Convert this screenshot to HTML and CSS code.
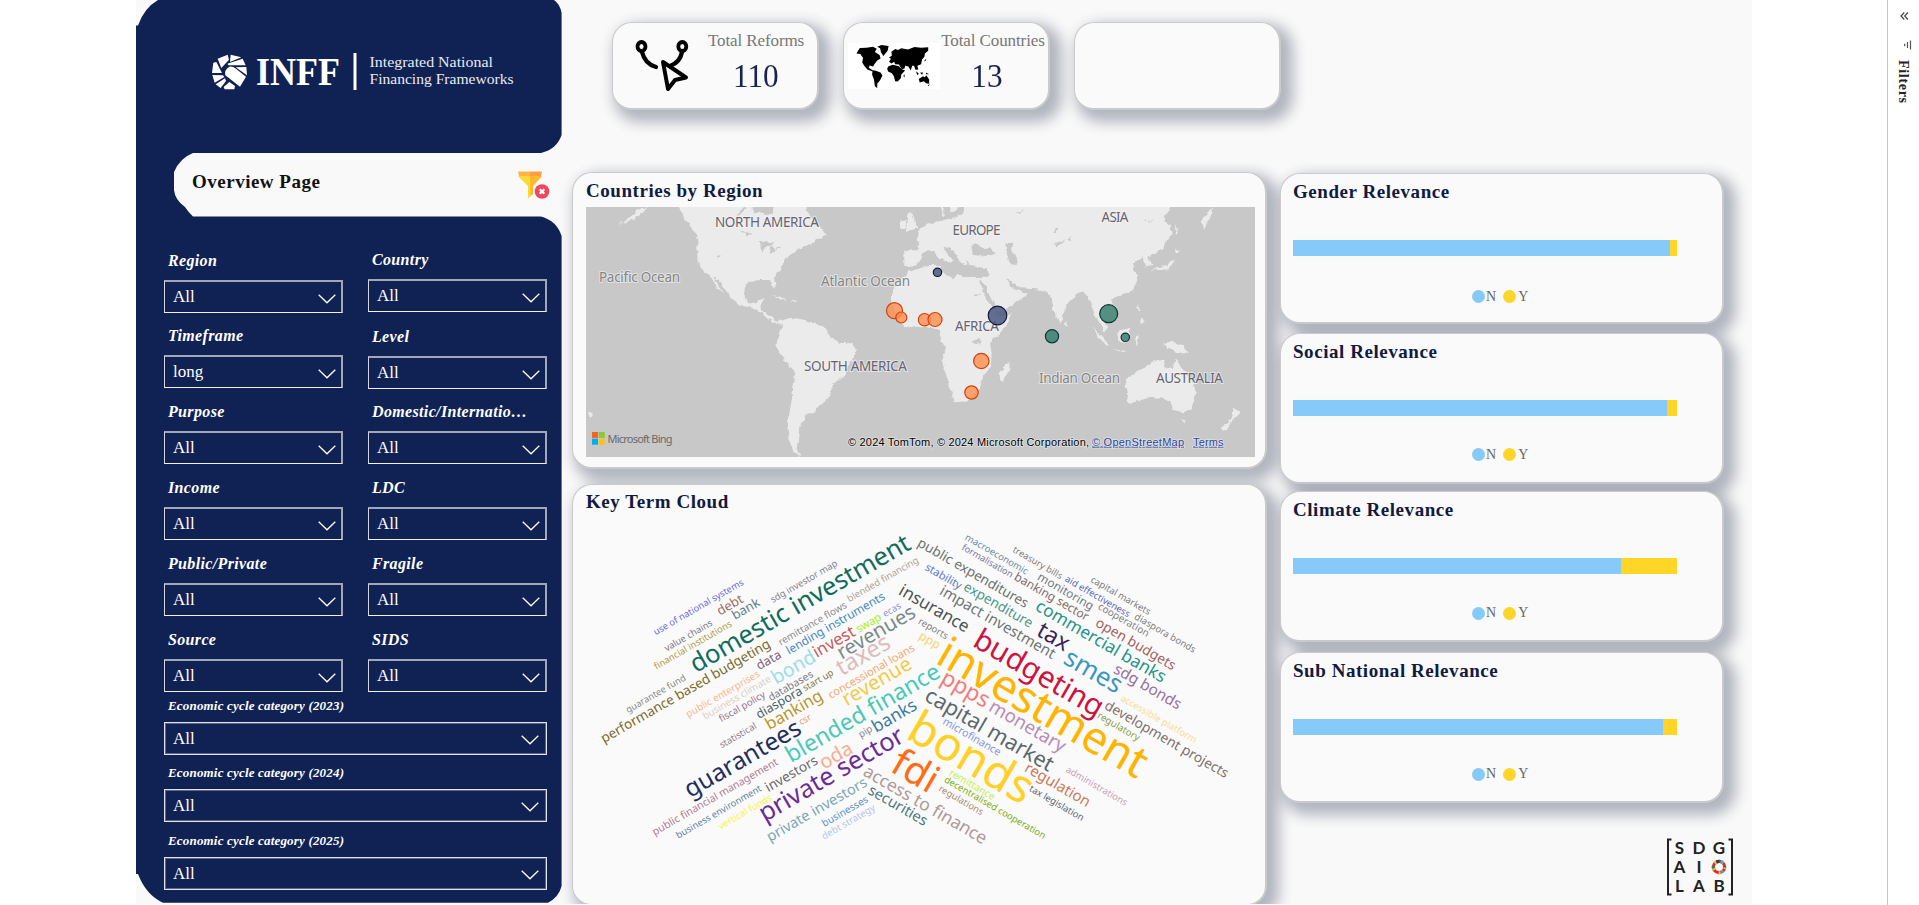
FILE: index.html
```html
<!DOCTYPE html>
<html lang="en">
<head>
<meta charset="utf-8">
<title>INFF Overview</title>
<link rel="stylesheet" href="styles.css">
</head>
<body>
<svg width="0" height="0" class="defs">
  <symbol id="chev" viewBox="0 0 18 10"><path d="M.7 .8 9 8.8 17.300 .8" fill="none" stroke="#fff" stroke-width="1.3"/></symbol>
</svg>
<div class="report">
  <aside class="sidebar">
    <svg class="sidebar-shape" width="426" height="905" viewBox="0 0 426 905">
      <path fill="#102254" d="M22 0Q8 8 2 25.500H0V874H2Q10 895 27 902.700H412Q423 897 425.600 886V236Q421 221 405 216.500H57Q53 213 49 207Q39 200 38 190V172Q44 158 57 153H405Q421 149 425.600 135V13Q424 4 418 0Z"/>
    </svg>
    <div class="brand">
      <svg width="290" height="48" viewBox="205 48 290 48" class="logo">
        <g transform="translate(130 0) scale(.33333)" fill="#fff">
          <path d="M263 176 293 164 297 179 274 204ZM302 164 334 172 300 186ZM338 176 347 196 296 196 292 191ZM349 201 351 226 317 202ZM298 200Q308 198 316 205L348 230 330 260 286 226Q282 210 298 200ZM250 188 259 186 276 219 246 219ZM247 225 279 226 283 231 254 248ZM257 253 285 235 288 243 272 264ZM281 261 298 246 315 258 313 268H284Z"/>
        </g>
        <text x="256" y="84.500" class="logo-name" textLength="84" lengthAdjust="spacingAndGlyphs">INFF</text>
        <rect x="353.500" y="53" width="3" height="37" fill="#fff"/>
        <text x="369.500" y="67" class="logo-tag" textLength="123.500" lengthAdjust="spacingAndGlyphs">Integrated National</text>
        <text x="369.500" y="83.800" class="logo-tag" textLength="144" lengthAdjust="spacingAndGlyphs">Financing Frameworks</text>
      </svg>
    </div>
    <div class="page-tab">
      <span>Overview Page</span>
      <svg width="32" height="29" viewBox="0 0 32 29" class="clear-filter">
        <path fill="#ffd93b" d="M0 5H24L15 15V23L10 27.500V15Z"/>
        <path fill="#ffb92c" d="M12 5H24L15 15V23L12.500 25Z"/>
        <path fill="#ffb545" d="M0 .5H12V5H1Z"/><path fill="#ff9f43" d="M12 .5H24L23 5H12Z"/>
        <circle cx="24" cy="20.500" r="7.300" fill="#f0465f"/>
        <path d="m21.700 18.200 4.600 4.600m0-4.600-4.600 4.600" stroke="#fff" stroke-width="2.200"/>
      </svg>
    </div>
    <div class="slicers">
      <div class="slicer-col">
        <div class="slicer tight"><label>Region</label><div class="box">All<svg><use href="#chev"/></svg></div></div>
        <div class="slicer"><label>Timeframe</label><div class="box">long<svg><use href="#chev"/></svg></div></div>
        <div class="slicer"><label>Purpose</label><div class="box">All<svg><use href="#chev"/></svg></div></div>
        <div class="slicer"><label>Income</label><div class="box">All<svg><use href="#chev"/></svg></div></div>
        <div class="slicer"><label>Public/Private</label><div class="box">All<svg><use href="#chev"/></svg></div></div>
        <div class="slicer"><label>Source</label><div class="box">All<svg><use href="#chev"/></svg></div></div>
      </div>
      <div class="slicer-col raised">
        <div class="slicer loose"><label>Country</label><div class="box">All<svg><use href="#chev"/></svg></div></div>
        <div class="slicer tight"><label>Level</label><div class="box">All<svg><use href="#chev"/></svg></div></div>
        <div class="slicer"><label>Domestic/Internatio…</label><div class="box">All<svg><use href="#chev"/></svg></div></div>
        <div class="slicer"><label>LDC</label><div class="box">All<svg><use href="#chev"/></svg></div></div>
        <div class="slicer"><label>Fragile</label><div class="box">All<svg><use href="#chev"/></svg></div></div>
        <div class="slicer"><label>SIDS</label><div class="box">All<svg><use href="#chev"/></svg></div></div>
      </div>
    </div>
    <div class="cycles">
      <div class="cycle"><label>Economic cycle category (2023)</label><div class="box wide">All<svg><use href="#chev"/></svg></div></div>
      <div class="cycle"><label>Economic cycle category (2024)</label><div class="box wide">All<svg><use href="#chev"/></svg></div></div>
      <div class="cycle last"><label>Economic cycle category (2025)</label><div class="box wide">All<svg><use href="#chev"/></svg></div></div>
    </div>
  </aside>

  <main class="content">
    <div class="kpis">
      <div class="card kpi">
        <svg width="60" height="56" viewBox="632 38 60 56" class="kpi-reform" fill="none" stroke="#000" stroke-linecap="round" stroke-linejoin="round">
          <ellipse cx="641.500" cy="46.500" rx="4" ry="4.500" stroke-width="3.800"/><ellipse cx="682.300" cy="46.500" rx="4" ry="4.500" stroke-width="3.800"/>
          <path stroke-width="4.300" d="M642 52Q645 64 656 67M682 52Q680 62 671 65.500"/>
          <path stroke-width="4" d="M663 62 686 77.500 675 80 668 89Z"/>
        </svg>
        <div class="kpi-text"><span class="kpi-label">Total Reforms</span><span class="kpi-value">110</span></div>
      </div>
      <div class="card kpi">
        <svg width="92" height="46" viewBox="611 129 195 137" preserveAspectRatio="none" class="kpi-world">
          <rect x="611" y="129" width="195" height="137" fill="#fff"/>
          <path d="M629 160 636 144 650 143 664 140 672 146 668 156 678 165 680 175 673 181 668 190 664 199 657 196 655 203 663 210 670 212 680 217 684 226 679 240 673 250 673 263 668 258 666 238 662 223 663 214 652 208 645 196 641 186 643 174 637 162Z"/>
          <path d="M673 140 682 135 697 138 695 152 686 168 681 157 679 145Z"/>
          <path d="M698 185 702 176 698 172 704 167 703 155 711 147 717 150 724 145 738 148 752 141 766 143 781 142 781 152 774 160 773 170 768 178 766 192 758 197 760 208 754 209 751 197 747 197 744 211 739 199 732 197 731 205 725 207 719 193 711 192 709 185 703 190Z"/>
          <path d="M697 198 706 194 719 198 725 207 732 211 724 223 723 234 716 244 711 243 708 227 704 219 696 214 694 205Z"/>
          <path d="M761 236 770 228 774 231 777 225 783 238 783 250 776 249 772 243 763 247ZM755 213 761 220 758 225ZM764 217 770 217 768 224ZM776 217 783 222 777 222ZM780 255 785 252 782 257ZM728 227 731 222 731 231ZM772 184 776 176 776 182Z"/>
        </svg>
        <div class="kpi-text countries"><span class="kpi-label">Total Countries</span><span class="kpi-value">13</span></div>
      </div>
      <div class="card kpi"></div>
    </div>

    <div class="panels">
      <div class="col-mid">
        <section class="card map-card">
          <h2>Countries by Region</h2>
          <svg class="map" width="669" height="250" viewBox="0 0 669 250">
            <defs>
              <filter id="coast" x="0" y="0" width="1" height="1"><feTurbulence type="fractalNoise" baseFrequency=".18" numOctaves="2" seed="4"/><feDisplacementMap in="SourceGraphic" scale="5" xChannelSelector="R" yChannelSelector="G"/></filter>
            </defs>
            <rect width="669" height="250" fill="#c8c8c8"/>
            <g filter="url(#coast)">
            <rect width="669" height="250" fill="#c8c8c8"/>
            <g transform="translate(-26 -47) scale(.33333)" fill="#ebebeb">
              <path d="M350 130 370 170 385 185 395 205 412 225 412 300 425 325 440 340 455 355 470 380 492 408 480 383 462 352 475 358 500 395 515 415 540 435 580 445 610 462 630 480 640 487 665 492 665 510 652 530 646 555 660 580 680 610 703 632 703 660 695 720 688 760 685 800 690 850 705 880 725 888 710 868 714 840 717 810 722 790 735 780 740 765 768 757 775 740 792 730 812 705 815 680 830 662 855 650 862 620 885 590 890 565 875 550 840 548 810 530 795 500 760 490 740 480 690 473 668 482 645 482 630 465 605 450 600 440 612 415 595 420 590 430 565 430 552 405 555 375 575 362 600 360 632 360 640 385 647 385 642 350 660 330 672 315 672 300 690 285 710 270 725 262 755 250 775 235 802 225 790 210 765 190 745 160 740 130Z"/>
              <path d="M640 405 665 412 680 422 660 418ZM690 422 712 424 705 430ZM170 195 200 180 235 150 260 141 240 165 205 185ZM84 755 100 760 90 775Z"/>
              <path fill="#c8c8c8" d="M575 130H640L635 160 618 168 600 155 580 160ZM540 215 585 222 560 225ZM600 245 640 250 630 258 612 262 608 280 602 262ZM635 255 650 270 640 280 628 285ZM650 260 665 262 650 266ZM560 130 545 160 530 165 540 150ZM470 285 485 288 474 292ZM690 165 700 180 680 175Z"/>
            </g>
            <g transform="translate(324 -47) scale(.33333)" fill="#ebebeb">
              <path d="M-5 335-30 360-50 390-57 420-50 450-35 480-12 503 20 497 60 500 85 510 95 545 105 560 95 600 108 640 120 680 132 727 160 725 190 710 215 670 222 645 243 620 245 580 240 550 270 520 300 480 302 463 265 470 250 445 225 405 208 365 215 355 190 350 160 352 140 345 130 358 95 335 90 318 60 318 30 325Z"/>
              <path d="M210 358 222 372 245 420 265 457 300 440 350 405 330 390 305 385 288 358 300 362 330 385 380 388 410 398 425 415 430 450 448 490 462 465 465 440 495 410 515 395 535 410 545 440 560 475 585 515 592 505 575 470 600 490 622 470 618 440 602 420 620 410 670 390 685 350 665 310 698 292 705 320 727 315 715 290 760 265 785 220 780 195 760 180 790 130H165L160 160 130 175 100 180 60 190 30 205 20 240 30 270-20 272-20 318 15 320 30 300 45 275 70 270 85 290 120 310 128 300 100 265 120 262 150 300 165 320 172 300 180 318 230 325 235 345Z"/>
              <path d="M90 130H150L140 150 100 165 95 150ZM-10 180 0 150 15 180 22 205-12 215ZM-28 185-14 180-16 205-28 208Z"/>
              <path d="M885 165 908 141 900 175 880 207 872 190ZM795 190 805 225 796 220ZM788 295 792 312 775 328 745 330 722 332 745 322 770 318ZM795 265 810 272 797 282ZM545 500 565 520 600 555 590 558 565 530ZM605 568 650 572 640 576ZM620 520 660 500 658 540 640 548 622 540ZM675 530 690 525 680 560ZM755 548 790 545 825 560 835 582 800 578 770 558ZM680 430 690 455 683 455ZM695 475 705 490 690 490ZM465 485 470 497 463 498ZM296 607 298 625 280 668 268 665 270 635Z"/>
              <path d="M645 660 680 635 710 620 725 605 765 600 762 620 788 628 798 595 812 620 850 670 858 700 845 745 820 757 790 750 780 725 755 712 710 715 655 732ZM812 775 828 778 820 790ZM972 745 990 757 972 775 945 812 932 808 965 775Z"/>
              <path fill="#c8c8c8" d="M182 260 200 250 215 265 240 262 258 282 230 288 185 285ZM285 250 310 248 305 275 322 295 320 318 300 315 292 285ZM100 130H118V170L105 172ZM425 250 465 240 440 262ZM430 215 445 200 440 220ZM470 240 485 225 478 242ZM320 160 340 150 325 162ZM188 545 210 530 212 555ZM190 405 215 400 200 410ZM705 180 735 178 715 184Z"/>
            </g>
            </g>
            <g class="map-land">
              <text x="129" y="20" textLength="104">NORTH AMERICA</text><text x="366.500" y="27.500" textLength="48">EUROPE</text>
              <text x="515.500" y="14.800" textLength="27">ASIA</text><text x="218" y="164" textLength="103">SOUTH AMERICA</text>
              <text x="369" y="123.500" textLength="44">AFRICA</text><text x="570" y="175.500" textLength="67">AUSTRALIA</text>
            </g>
            <g class="map-sea">
              <text x="13" y="74.500" textLength="81">Pacific Ocean</text><text x="235" y="78.500" textLength="89">Atlantic Ocean</text><text x="453" y="175.500" textLength="81">Indian Ocean</text>
            </g>
            <g fill="#ff8f4f" fill-opacity=".8" stroke="#cf420f" stroke-width="1.200">
              <circle cx="308.500" cy="103.700" r="8"/><circle cx="315.300" cy="110.500" r="5.500"/><circle cx="338.500" cy="112.700" r="6.200"/><circle cx="349" cy="112.500" r="7"/><circle cx="395.300" cy="154" r="7.700"/><circle cx="385.500" cy="185.500" r="6.700"/>
            </g>
            <g fill="#4a577f" fill-opacity=".85" stroke="#121a3c" stroke-width="1.200"><circle cx="351.500" cy="65.300" r="4.200"/><circle cx="411.500" cy="108.500" r="9.300"/></g>
            <g fill="#39806f" fill-opacity=".85" stroke="#0b3a33" stroke-width="1.200"><circle cx="522.700" cy="106.700" r="9"/><circle cx="466" cy="129.300" r="6.600"/><circle cx="539.300" cy="130.300" r="4.200"/></g>
            <g transform="translate(6 225)"><path fill="#f26522" d="M0 0h6v6H0z"/><path fill="#8dc63f" d="M6.700 0h6v6h-6z"/><path fill="#00aeef" d="M0 6.700h6v6H0z"/><path fill="#ffc20e" d="M6.700 6.700h6v6h-6z"/></g>
            <text x="21.500" y="235.500" class="bing" textLength="65">Microsoft Bing</text>
            <g class="map-copy">
              <text x="262" y="238.500" textLength="241">© 2024 TomTom, © 2024 Microsoft Corporation,</text>
              <text x="506" y="238.500" textLength="92" class="link">© OpenStreetMap</text><text x="607" y="238.500" textLength="30.500" class="link">Terms</text>
            </g>
          </svg>
        </section>
        <section class="card cloud-card">
          <h2>Key Term Cloud</h2>
          <svg class="cloud" id="cloud" width="660" height="340" viewBox="590 520 660 340"></svg>
        </section>
      </div>
      <div class="col-right">
        <section class="card rel"><h2>Gender Relevance</h2><div class="bar"><i style="width:98.2%"></i></div><div class="legend"><b></b>N<b class="y"></b>Y</div></section>
        <section class="card rel social"><h2>Social Relevance</h2><div class="bar"><i style="width:97.3%"></i></div><div class="legend"><b></b>N<b class="y"></b>Y</div></section>
        <section class="card rel climate"><h2>Climate Relevance</h2><div class="bar"><i style="width:85.5%"></i></div><div class="legend"><b></b>N<b class="y"></b>Y</div></section>
        <section class="card rel sub"><h2>Sub National Relevance</h2><div class="bar"><i style="width:96.4%"></i></div><div class="legend"><b></b>N<b class="y"></b>Y</div></section>
        <svg class="lab" width="68" height="58" viewBox="0 0 68 58">
          <path fill="none" stroke="#222" stroke-width="2" d="M5.500 1.500H2V56.500H5.500M62.500 1.500H66V56.500H62.500"/>
          <g class="lab-text"><text x="13.500" y="16">S</text><text x="33" y="16">D</text><text x="53" y="16">G</text><text x="13.500" y="35">A</text><text x="33" y="35">I</text><text x="13.500" y="54">L</text><text x="33" y="54">A</text><text x="53" y="54">B</text></g>
          <g fill="none" stroke-width="3.200" transform="translate(53 29)">
            <circle r="5.600" stroke="#e5243b"/><circle r="5.600" stroke="#fcc30b" stroke-dasharray="2 5"/><circle r="5.600" stroke="#26bde2" stroke-dasharray="2.200 9.500" stroke-dashoffset="-4"/><circle r="5.600" stroke="#3f7e44" stroke-dasharray="2.200 15.400" stroke-dashoffset="-16"/><circle r="5.600" stroke="#19486a" stroke-dasharray="3 32.200" stroke-dashoffset="-23"/>
          </g>
        </svg>
      </div>
    </div>
  </main>
</div>
<div class="filters-pane">
  <svg width="9" height="8" viewBox="0 0 9 8" fill="none" stroke="#444" stroke-width="1.200"><path d="M4.300.5 1 4 4.300 7.500M8 .5 4.700 4 8 7.500"/></svg>
  <svg class="funnel" width="9" height="10" viewBox="0 0 9 10" stroke="#555" stroke-width="1.200"><path d="M7.500.5V9.500M4.500 2V8M1.700 3.800V6.200"/></svg>
  <span>Filters</span>
</div>
<script src="cloud.js"></script>
</body>
</html>
```

FILE: styles.css
```css
* { box-sizing: border-box; }
body { margin: 0; width: 1919px; height: 905px; overflow: hidden; background: #fff; display: flex; font-family: "Liberation Serif", "Times New Roman", serif; }
.defs { position: absolute; }
.report { margin-left: 136px; width: 1616px; height: 904px; background: #f9f9f9; display: flex; overflow: hidden; flex: none; }
.sidebar { width: 426px; height: 905px; position: relative; flex: none; color: #fff; }
.sidebar-shape { position: absolute; left: 0; top: 0; z-index: 0; }
.brand, .page-tab, .slicers, .cycles { position: relative; }
.brand { height: 153px; padding: 48px 0 0 69px; }
.logo { display: block; overflow: visible; }
.logo-name { font-size: 39px; font-weight: bold; fill: #fff; }
.logo-tag { font-size: 15px; fill: #e8eaf0; }
.page-tab { height: 64px; padding: 18px 12px 0 56px; display: flex; justify-content: space-between; color: #111; font-size: 19px; font-weight: bold; line-height: 21px; letter-spacing: .5px; }
.slicers { display: flex; gap: 25px; padding: 33px 0 0 28px; height: 478px; }
.slicer-col { width: 179px; }
.raised { margin-top: -1px; }
.slicer { height: 76px; }
.slicer.tight { height: 75px; }
.slicer.loose { height: 77px; }
.slicer label, .cycle label { display: block; font-weight: bold; font-style: italic; white-space: nowrap; }
.slicer label { font-size: 16px; line-height: 18px; padding-left: 4px; height: 30px; padding-top: 1.500px; letter-spacing: .35px; }
.box { height: 33px; border: 2px solid #a0a7b8; border-left: 1px solid #d4d7df; border-bottom: 1px solid #f0f1f4; padding: 0 5px 0 8px; display: flex; align-items: center; justify-content: space-between; font-size: 17px; line-height: 30px; }
.box svg { width: 18px; height: 10px; margin-top: 3px; }
.box.wide { border: 1px solid #dfe2e9; box-shadow: inset 0 0 0 1px #59668a; width: 383px; padding-right: 7px; }
.cycles { padding-left: 28px; }
.cycle { height: 67px; }
.cycle + .cycle { height: 68px; }
.cycle label { font-size: 13px; line-height: 16px; height: 27px; padding: 3px 0 0 4px; letter-spacing: .18px; }
.content { width: 1190px; padding-top: 22px; }
.card { background: #fafafa; border: 1px solid #c9cacc; border-right-width: 2px; border-bottom-width: 2px; border-radius: 20px; box-shadow: 7px 7px 14px 5px rgba(16, 28, 60, .31); flex: none; }
.card h2 { margin: 0; font-size: 19px; line-height: 22px; letter-spacing: .55px; color: #111a40; }
.kpis { display: flex; gap: 24px; padding-left: 50px; height: 150px; }
.kpi { width: 207px; height: 88px; display: flex; }
.kpi-reform { margin: 15px 0 0 19px; }
.kpi-world { margin: 20px 0 0 4px; flex: none; }
.kpi-text { display: flex; flex-direction: column; align-items: center; width: 116px; white-space: nowrap; padding-top: 8px; margin-left: 6px; }
.countries { width: 104px; margin-left: 1px; }
.kpi-label { font-size: 17px; line-height: 20px; color: #777; letter-spacing: -.1px; }
.kpi-value { font-size: 34px; line-height: 36px; margin-top: 7px; color: #182352; transform: scaleX(.92); }
.countries .kpi-value { margin-left: -12px; }
.panels { display: flex; gap: 13px; padding-left: 10px; }
.col-mid { width: 695px; }
.map-card { height: 297px; padding: 7px 0 0 13px; }
.map { display: block; margin-top: 5px; }
.cloud-card { height: 422px; margin-top: 15px; padding: 6px 0 0 13px; }
.cloud { display: block; margin: 7px 0 0 4px; overflow: visible; font-family: "Noto Sans", "Open Sans", sans-serif; }
.map-land, .map-sea { font: 13.500px "Noto Sans", sans-serif; paint-order: stroke; stroke: rgba(245, 245, 245, .6); stroke-width: 2px; }
.map-land { fill: #666472; }
.map-sea { fill: #858585; }
.bing { font: 11px "Noto Sans", sans-serif; fill: #6a6a6a; }
.map-copy { font: 11px "Liberation Sans", Arial, sans-serif; fill: #000; paint-order: stroke; stroke: #e2e2e2; stroke-width: 1.500px; }
.link { fill: #2b44a0; text-decoration: underline; }
.col-right { width: 444px; padding-top: 1px; }
.rel { height: 151px; padding: 7px 0 0 12px; }
.rel.social { margin-top: 8.500px; }
.rel.climate { margin-top: 7.500px; }
.rel.sub { margin-top: 10px; }
.bar { margin-top: 37px; width: 384px; height: 16px; background: #ffd528; display: flex; }
.bar i { background: #85caf8; height: 100%; }
.legend { margin: 32.500px 0 0 179px; display: flex; align-items: center; height: 16px; font-size: 14px; color: #666; }
.rel + .rel .legend { margin-top: 31px; }
.legend b { width: 13px; height: 13px; border-radius: 50%; background: #85caf8; margin-right: 1px; }
.legend .y { background: #ffd528; margin: 0 2px 0 7px; }
.lab { display: block; margin: 35px 0 0 386px; }
.lab-text { font: bold 17px Lato, sans-serif; fill: #222; text-anchor: middle; }
.filters-pane { margin-left: 135px; width: 32px; border-left: 1px solid #c8c8c8; height: 905px; display: flex; flex-direction: column; align-items: center; padding: 12px 0 0 2px; flex: none; }
.filters-pane .funnel { margin: 20px 0 0 5px; }
.filters-pane span { writing-mode: vertical-rl; font-weight: bold; font-size: 14px; line-height: 16px; margin: 10px 3px 0 0; letter-spacing: .7px; color: #252423; }
```

FILE: cloud.js
```js
// Each entry: text, baseline start x, y, baseline end x, colour (in thirds of a pixel).
const rising = [
  ["use of national systems",197,347,463,"#6a6ad0"],["debt",390,288,463,"#a06a5a"],["bank",435,301,513,"#5f7f86"],
  ["sdg investor map",548,250,745,"#7d8090"],["domestic investment",318,461,968,"#0f6b5c"],["value chains",230,396,370,"#7c7480"],
  ["financial institutions",199,450,428,"#b09a40"],["blended financing",778,248,988,"#b0a296"],["remittance flows",572,378,773,"#8c8c94"],
  ["lending instruments",597,405,888,"#3e88c0"],["guarantee fund",114,581,290,"#8a8a8a"],["performance based budgeting",42,671,545,"#7b6a25"],
  ["data",508,452,577,"#80607a"],["bond",558,495,682,"#9edcea"],["invest",680,415,800,"#c65a5a"],["swap",806,340,877,"#a8f018"],
  ["ecas",885,293,936,"#8e92c8"],["revenues",755,420,982,"#7a8a8a"],["taxes",755,470,907,"#dfbcbc"],["public enterprises",295,594,512,"#f5b888"],
  ["business climate",345,600,546,"#dcd0c4"],["fiscal policy",394,608,528,"#94708c"],["databases",542,545,672,"#7a7a88"],
  ["start up",645,515,733,"#7a7440"],["diaspora",507,598,640,"#4a626c"],["concessional loans",722,538,977,"#f5a870"],
  ["revenue",770,560,970,"#f0cc4c"],["statistical",395,686,502,"#8c7c8c"],["banking",538,632,702,"#b8962c"],["csr",633,617,666,"#e09a70"],
  ["guarantees",300,836,640,"#1f2e5c"],["blended finance",603,731,1056,"#48c8b8"],["pip",812,655,850,"#8a8a90"],["banks",858,640,985,"#3c7e9c"],
  ["private sector",524,908,948,"#6c2c98"],["oda",702,750,793,"#f8ac90"],["investors",535,818,687,"#6a6a6a"],
  ["public financial management",194,948,567,"#b07c90"],["business environment",265,957,517,"#5a7f9c"],["vertical funds",392,930,548,"#f4f440"],
  ["private investors",540,967,835,"#7aa8b4"],["businesses",703,922,837,"#5a90c0"],["debt strategy",702,960,858,"#b8c4ec"]
];
const falling = [
  ["public expenditures",84,80,410,"#6a7070"],["macroeconomic",227,61,412,"#6a8ca0"],["formalisation",217,91,367,"#7478a4"],
  ["treasury bills",370,98,515,"#847c78"],["banking sector",374,181,592,"#7a6c6c"],["monitoring",444,181,607,"#707884"],
  ["aid effectiveness",527,186,718,"#5a68b8"],["capital markets",604,188,780,"#7a7a7c"],["cooperation",626,269,775,"#848484"],
  ["diaspora bonds",735,299,915,"#80807c"],["stability",107,152,212,"#5c78cc"],["expenditure",222,212,423,"#4c9888"],
  ["impact investment",150,225,490,"#6c7474"],["insurance",27,225,230,"#4a5454"],["commercial banks",437,272,820,"#1f9488"],
  ["open budgets",618,320,852,"#a0605c"],["tax",440,348,527,"#382458"],["smes",520,432,683,"#3898bc"],["sdg bonds",672,460,868,"#98709c"],
  ["budgeting",248,380,625,"#cc1440"],["investment",136,430,745,"#ffb400"],["reports",87,313,172,"#7c7c80"],["ppp",88,358,147,"#f8d470"],
  ["ppps",152,490,288,"#f47c7c"],["monetary",297,574,519,"#b88cb8"],["capital market",104,543,480,"#5a686c"],["microfinance",160,614,330,"#8098e0"],
  ["bonds",47,655,402,"#ffd028"],["fdi",0,755,122,"#ff6c18"],["regulation",405,756,595,"#c87858"],["remittance",180,768,312,"#c4f048"],
  ["decentralised cooperation",165,788,465,"#7cac20"],["regulations",148,815,278,"#a88c78"],["tax legislation",420,815,580,"#5c6474"],
  ["administrations",530,758,710,"#c8a0b4"],["regulatory",624,596,747,"#88a048"],["accessible platform",694,544,918,"#f8dc90"],
  ["development projects",645,568,1010,"#7c7070"],["access to finance",-80,768,283,"#b09898"],["securities",-65,823,107,"#4c7884"]
];
const cloud = document.getElementById("cloud");
function draw(words, left, top, angle) {
  for (const [text, x0, y0, x1, colour] of words) {
    const el = document.createElementNS("http://www.w3.org/2000/svg", "text");
    el.textContent = text;
    el.setAttribute("fill", colour);
    el.setAttribute("font-size", 100);
    cloud.appendChild(el);
    const length = (x1 - x0) / 3 / Math.cos(Math.PI / 6);
    el.setAttribute("font-size", 100 * length / el.getComputedTextLength());
    el.setAttribute("transform", `translate(${left + x0 / 3} ${top + y0 / 3}) rotate(${angle})`);
  }
}
draw(rising, 590, 519.7, -30);
draw(falling, 888.6, 518.8, 30);
```
